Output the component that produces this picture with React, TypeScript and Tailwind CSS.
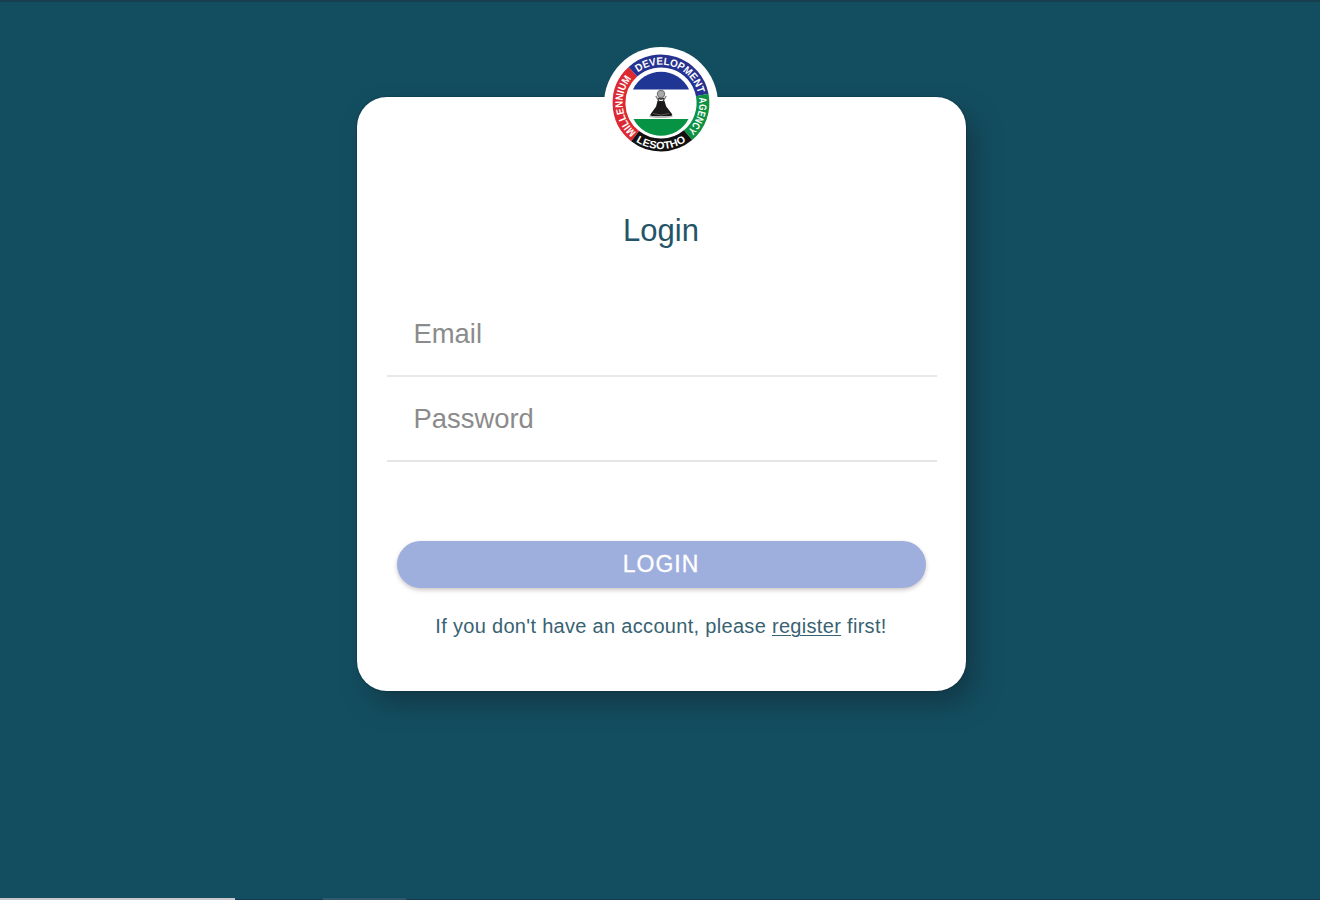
import React from "react";

const C = 57;

function polar(radius: number, deg: number): string {
  const a = (deg * Math.PI) / 180;
  return `${(C + radius * Math.sin(a)).toFixed(2)} ${(C + radius * Math.cos(a) * -1).toFixed(2)}`;
}

// Arc measured in degrees clockwise from the top; runs backwards when to < from.
function arc(radius: number, from: number, to: number): string {
  const large = Math.abs(to - from) > 180 ? 1 : 0;
  const sweep = to > from ? 1 : 0;
  return `M${polar(radius, from)}A${radius} ${radius} 0 ${large} ${sweep} ${polar(radius, to)}`;
}

const segments = [
  { id: "millennium", text: "MILLENNIUM", color: "#dc2932", from: 218, to: 318, r: 38.3, a: 220, b: 316, len: 60 },
  { id: "development", text: "DEVELOPMENT", color: "#25328f", from: -42, to: 79, r: 38.3, a: -37, b: 78, len: 75 },
  { id: "agency", text: "AGENCY", color: "#0d9142", from: 79, to: 140, r: 38.3, a: 82, b: 139, len: 36 },
  { id: "lesotho", text: "LESOTHO", color: "#111111", from: 140, to: 218, r: 46, a: 213, b: 144, len: 53 },
];

function Seal() {
  return (
    <svg width="114" height="114" viewBox="0 0 114 114" aria-label="Millennium Development Agency Lesotho">
      <circle cx="57" cy="58" r="57" fill="#fff" />
      {segments.map((s) => (
        <g key={s.id}>
          <path d={arc(42, s.from, s.to)} fill="none" stroke={s.color} strokeWidth="12.8" />
          <path id={s.id} d={arc(s.r, s.a, s.b)} fill="none" />
          <text fill="#fff" fontSize="10.5" fontWeight="700" fontFamily="Liberation Sans, Arial, sans-serif">
            <textPath href={`#${s.id}`} textLength={s.len} lengthAdjust="spacingAndGlyphs">
              {s.text}
            </textPath>
          </text>
        </g>
      ))}
      <path d="M29 43.5A31 31 0 0 1 85 43.5Z" fill="#203695" />
      <path d="M29.5 73A31 31 0 0 0 84.5 73Z" fill="#079344" />
      <ellipse cx="57" cy="70.3" rx="12" ry="1.8" fill="#999" opacity=".7" />
      <path d="M53.5 55h7l1.7 5.5 5.8 7.5c.8 1.3-.4 2-2 2H48.3c-1.7 0-2.6-.8-1.6-2l5.4-7.5Z" fill="#1b191a" />
      <path d="M49 67.5q8 3 16 0" fill="none" stroke="#666" strokeWidth=".8" />
      <path d="M54.5 56v-3.5h5V56M57 54v-6" fill="none" stroke="#333" strokeWidth="1.4" />
      <circle cx="57" cy="48" r="3.6" fill="#aaa" stroke="#777" strokeWidth="1.2" />
      <path d="M51.8 50l2.4 4M62.2 50l-2.4 4" stroke="#777" strokeWidth="1.3" />
    </svg>
  );
}

export default function App() {
  return (
    <div className="flex h-[900px] w-full flex-col overflow-hidden bg-[#134e60] font-['Liberation_Sans',Arial,sans-serif]">
      <div className="h-0.5 shrink-0 bg-[#183f50]" />
      <main className="flex flex-1 justify-center pt-[95px] pl-[2px]">
        <form
          className="relative flex h-[594px] w-[609px] flex-col rounded-[30px] bg-white px-[30px] shadow-[10px_14px_28px_-4px_rgba(18,32,43,0.55),0_0_2px_#062f43]"
          onSubmit={(e) => e.preventDefault()}
        >
          <div className="absolute -top-[51px] left-[247px]">
            <Seal />
          </div>
          <h1 className="mt-[114px] text-center text-[31px] leading-10 text-[#245468]">Login</h1>
          <input
            type="email"
            placeholder="Email"
            className="mt-[41px] h-[85px] w-[550px] border-b-2 border-[#e8e8e8] px-[27px] text-[27.4px] text-[#555] outline-none placeholder:text-[#8b8b8b]"
          />
          <input
            type="password"
            placeholder="Password"
            className="h-[85px] w-[550px] border-b-2 border-[#e5e5e5] px-[27px] text-[27.4px] text-[#555] outline-none placeholder:text-[#8b8b8b]"
          />
          <button className="mx-[10px] mt-[79px] h-[47px] rounded-full bg-[#9fafdd] text-[23px] tracking-[1px] text-white shadow-[0_2px_4px_rgba(70,50,50,0.28)] [-webkit-text-stroke:0.3px_white]">
            LOGIN
          </button>
          <p className="mt-[24px] text-center text-[20px] leading-7 tracking-[0.31px] whitespace-nowrap text-[#386272]">
            If you don&#39;t have an account, please{" "}
            <a href="#" className="underline decoration-1 underline-offset-2">
              register
            </a>{" "}
            first!
          </p>
        </form>
      </main>
      <footer className="flex h-[3px] shrink-0 items-end">
        <div className="h-[2px] w-[235px] bg-[#c9c8cf]" />
        <div className="h-px w-[88px] bg-[#163b53]" />
        <div className="h-[2px] w-[83px] bg-[#31576c]" />
        <div className="h-px flex-1 bg-[#163b53]" />
      </footer>
    </div>
  );
}
